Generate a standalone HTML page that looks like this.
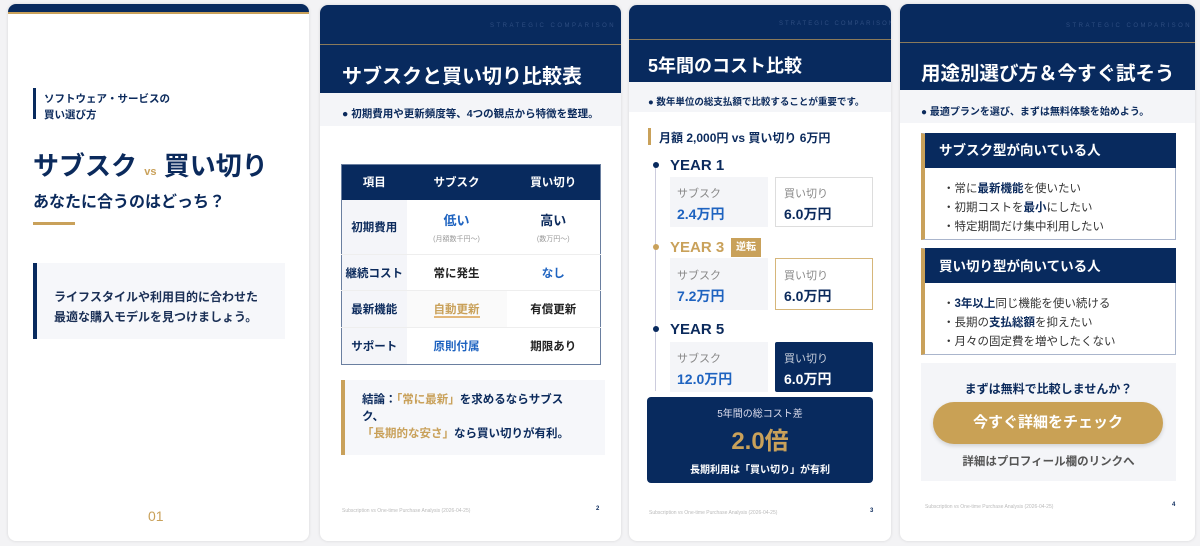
<!DOCTYPE html>
<html><head><meta charset="utf-8"><style>
*{margin:0;padding:0;box-sizing:border-box}
body{width:1200px;height:546px;background:#f3f3f5;position:relative;overflow:hidden;font-family:"Liberation Sans","Noto Sans CJK JP",sans-serif;color:#0b2a5c}
.card{position:absolute;background:#fff;border-radius:8px;overflow:hidden;box-shadow:0 0 3px rgba(0,0,0,.12)}
.a{position:absolute;white-space:nowrap}
.nv{background:#082a5e}
.gold{color:#c9a15a}
.b{font-weight:bold}
.strat{font-size:6px;letter-spacing:2.5px;color:#2e4d80}
.foot{font-size:5px;color:#bbb}
.band{background:#f4f5f8}
td{text-align:center;font-weight:bold;font-size:11.5px}
</style></head><body>

<!-- card 1 -->
<div class="card" style="left:8px;top:4px;width:301px;height:537px">
 <div class="a nv" style="left:0;top:0;width:301px;height:8px"></div>
 <div class="a" style="left:0;top:8px;width:301px;height:2px;background:#c9a15a"></div>
 <div class="a nv" style="left:25px;top:84px;width:3px;height:31px"></div>
 <div class="a b" style="left:36px;top:87px;font-size:10.5px;line-height:16px">ソフトウェア・サービスの<br>買い選び方</div>
 <div class="a b" style="left:25px;top:142px;font-size:26px">サブスク <span class="gold" style="font-size:11px">vs</span> 買い切り</div>
 <div class="a b" style="left:25px;top:184px;font-size:16px">あなたに合うのはどっち？</div>
 <div class="a" style="left:25px;top:218px;width:42px;height:3px;background:#c9a15a"></div>
 <div class="a" style="left:25px;top:259px;width:252px;height:76px;background:#f6f7fa"></div>
 <div class="a nv" style="left:25px;top:259px;width:4px;height:76px"></div>
 <div class="a b" style="left:46px;top:283px;font-size:12px;line-height:20px;color:#1a2f55">ライフスタイルや利用目的に合わせた<br>最適な購入モデルを見つけましょう。</div>
 <div class="a gold" style="left:140px;top:504px;font-size:14px">01</div>
</div>

<!-- card 2 -->
<div class="card" style="left:320px;top:5px;width:301px;height:536px">
 <div class="a nv" style="left:0;top:0;width:301px;height:88px"></div>
 <div class="a strat" style="left:170px;top:18px">STRATEGIC COMPARISON</div>
 <div class="a" style="left:0;top:39px;width:301px;height:1px;background:#8a7a5a"></div>
 <div class="a b" style="left:22px;top:55px;font-size:20px;color:#fff">サブスクと買い切り比較表</div>
 <div class="a band" style="left:0;top:88px;width:301px;height:33px"></div>
 <div class="a b" style="left:22px;top:101px;font-size:10.5px">● 初期費用や更新頻度等、4つの観点から特徴を整理。</div>
 <table class="a" style="left:21px;top:159px;width:260px;height:200px;border-collapse:collapse;border:1px solid #6a7fa0">
  <tr class="nv" style="height:35px;color:#fff"><td style="width:65px">項目</td><td style="width:100px">サブスク</td><td>買い切り</td></tr>
  <tr style="height:55px"><td style="background:#f4f5f9">初期費用</td><td style="color:#1e63c0;font-size:13px">低い<br><span style="font-size:7px;color:#999;font-weight:normal">(月額数千円〜)</span></td><td style="font-size:13px">高い<br><span style="font-size:7px;color:#999;font-weight:normal">(数万円〜)</span></td></tr>
  <tr style="height:36px;border-top:1px solid #eee"><td style="background:#f4f5f9">継続コスト</td><td style="color:#222">常に発生</td><td style="color:#1e63c0">なし</td></tr>
  <tr style="height:37px;border-top:1px solid #eee"><td style="background:#f4f5f9">最新機能</td><td style="background:#fafafa"><span style="color:#c9a15a;border-bottom:2px solid #e2b77a">自動更新</span></td><td style="color:#222">有償更新</td></tr>
  <tr style="height:37px;border-top:1px solid #eee"><td style="background:#f4f5f9">サポート</td><td style="color:#1e63c0">原則付属</td><td style="color:#222">期限あり</td></tr>
 </table>
 <div class="a" style="left:21px;top:375px;width:264px;height:75px;background:#f6f7fa"></div>
 <div class="a" style="left:21px;top:375px;width:4px;height:75px;background:#c9a15a"></div>
 <div class="a b" style="left:42px;top:387px;font-size:11.5px;line-height:17px">結論：<span class="gold">「常に最新」</span>を求めるならサブス<br>ク、<br><span class="gold">「長期的な安さ」</span>なら買い切りが有利。</div>
 <div class="a foot" style="left:22px;top:503px">Subscription vs One-time Purchase Analysis (2026-04-25)</div>
 <div class="a b" style="left:276px;top:501px;font-size:6px">2</div>
</div>

<!-- card 3 -->
<div class="card" style="left:629px;top:5px;width:262px;height:536px">
 <div class="a nv" style="left:0;top:0;width:262px;height:77px"></div>
 <div class="a strat" style="left:150px;top:16px;letter-spacing:2px">STRATEGIC COMPARISON</div>
 <div class="a" style="left:0;top:34px;width:262px;height:1px;background:#8a7a5a"></div>
 <div class="a b" style="left:19px;top:47px;font-size:18px;color:#fff">5年間のコスト比較</div>
 <div class="a band" style="left:0;top:77px;width:262px;height:30px"></div>
 <div class="a b" style="left:19px;top:89px;font-size:9.5px">● 数年単位の総支払額で比較することが重要です。</div>
 <div class="a" style="left:19px;top:123px;width:3px;height:17px;background:#c9a15a"></div>
 <div class="a b" style="left:30px;top:124px;font-size:12px">月額 2,000円 vs 買い切り 6万円</div>
 <div class="a" style="left:26px;top:158px;width:1px;height:228px;background:#ccd"></div>
 <div class="a nv" style="left:24px;top:157px;width:6px;height:6px;border-radius:50%"></div>
 <div class="a b" style="left:41px;top:152px;font-size:15px">YEAR 1</div>
 <div class="a band" style="left:41px;top:172px;width:98px;height:50px"></div>
 <div class="a" style="left:48px;top:180px;font-size:11px;color:#888">サブスク</div>
 <div class="a b" style="left:48px;top:199px;font-size:14px;color:#1e63c0">2.4万円</div>
 <div class="a" style="left:146px;top:172px;width:98px;height:50px;border:1px solid #ddd"></div>
 <div class="a" style="left:155px;top:180px;font-size:11px;color:#888">買い切り</div>
 <div class="a b" style="left:155px;top:199px;font-size:14px">6.0万円</div>
 <div class="a" style="left:24px;top:239px;width:6px;height:6px;border-radius:50%;background:#c9a15a"></div>
 <div class="a b gold" style="left:41px;top:234px;font-size:15px">YEAR 3</div>
 <div class="a b" style="left:102px;top:233px;width:30px;height:19px;background:#c9a15a;color:#fff;font-size:10px;text-align:center;line-height:19px">逆転</div>
 <div class="a band" style="left:41px;top:253px;width:98px;height:52px"></div>
 <div class="a" style="left:48px;top:262px;font-size:11px;color:#888">サブスク</div>
 <div class="a b" style="left:48px;top:281px;font-size:14px;color:#1e63c0">7.2万円</div>
 <div class="a" style="left:146px;top:253px;width:98px;height:52px;border:1px solid #d6b67a"></div>
 <div class="a" style="left:155px;top:262px;font-size:11px;color:#888">買い切り</div>
 <div class="a b" style="left:155px;top:281px;font-size:14px">6.0万円</div>
 <div class="a nv" style="left:24px;top:321px;width:6px;height:6px;border-radius:50%"></div>
 <div class="a b" style="left:41px;top:316px;font-size:15px">YEAR 5</div>
 <div class="a band" style="left:41px;top:337px;width:98px;height:50px"></div>
 <div class="a" style="left:48px;top:345px;font-size:11px;color:#888">サブスク</div>
 <div class="a b" style="left:48px;top:364px;font-size:14px;color:#1e63c0">12.0万円</div>
 <div class="a nv" style="left:146px;top:337px;width:98px;height:50px;border-radius:2px"></div>
 <div class="a" style="left:155px;top:345px;font-size:11px;color:#c8cfdc">買い切り</div>
 <div class="a b" style="left:155px;top:364px;font-size:14px;color:#fff">6.0万円</div>
 <div class="a nv" style="left:18px;top:392px;width:226px;height:86px;border-radius:4px"></div>
 <div class="a" style="left:18px;top:400px;width:226px;text-align:center;font-size:10px;color:#dde">5年間の総コスト差</div>
 <div class="a b gold" style="left:18px;top:416px;width:226px;text-align:center;font-size:24px">2.0倍</div>
 <div class="a b" style="left:18px;top:456px;width:226px;text-align:center;font-size:10px;color:#fff">長期利用は「買い切り」が有利</div>
 <div class="a foot" style="left:20px;top:505px">Subscription vs One-time Purchase Analysis (2026-04-25)</div>
 <div class="a b" style="left:241px;top:503px;font-size:6px">3</div>
</div>

<!-- card 4 -->
<div class="card" style="left:900px;top:4px;width:295px;height:537px">
 <div class="a nv" style="left:0;top:0;width:295px;height:86px"></div>
 <div class="a strat" style="left:166px;top:19px">STRATEGIC COMPARISON</div>
 <div class="a" style="left:0;top:38px;width:295px;height:1px;background:#8a7a5a"></div>
 <div class="a b" style="left:21px;top:53px;font-size:19.5px;color:#fff">用途別選び方＆今すぐ試そう</div>
 <div class="a band" style="left:0;top:86px;width:295px;height:33px"></div>
 <div class="a b" style="left:21px;top:99px;font-size:10px">● 最適プランを選び、まずは無料体験を始めよう。</div>

 <div class="a" style="left:21px;top:129px;width:255px;height:107px;border:1px solid #aab5cc;border-left:4px solid #c9a15a"></div>
 <div class="a nv" style="left:25px;top:129px;width:251px;height:35px"></div>
 <div class="a b" style="left:39px;top:145px;font-size:13.5px;color:#fff;transform:translateY(-50%)">サブスク型が向いている人</div>
 <div class="a" style="left:43px;top:176px;font-size:11.5px;line-height:19px;color:#333">・常に<b style="color:#0b2a5c">最新機能</b>を使いたい<br>・初期コストを<b style="color:#0b2a5c">最小</b>にしたい<br>・特定期間だけ集中利用したい</div>

 <div class="a" style="left:21px;top:244px;width:255px;height:107px;border:1px solid #aab5cc;border-left:4px solid #c9a15a"></div>
 <div class="a nv" style="left:25px;top:244px;width:251px;height:35px"></div>
 <div class="a b" style="left:39px;top:261px;font-size:13.5px;color:#fff;transform:translateY(-50%)">買い切り型が向いている人</div>
 <div class="a" style="left:43px;top:291px;font-size:11.5px;line-height:19px;color:#333">・<b style="color:#0b2a5c">3年以上</b>同じ機能を使い続ける<br>・長期の<b style="color:#0b2a5c">支払総額</b>を抑えたい<br>・月々の固定費を増やしたくない</div>

 <div class="a band" style="left:21px;top:359px;width:255px;height:118px"></div>
 <div class="a b" style="left:21px;top:376px;width:255px;text-align:center;font-size:12px">まずは無料で比較しませんか？</div>
 <div class="a b" style="left:33px;top:398px;width:230px;height:42px;border-radius:21px;background:#c9a155;color:#fff;font-size:15px;text-align:center;line-height:42px;box-shadow:0 2px 4px rgba(0,0,0,.15)">今すぐ詳細をチェック</div>
 <div class="a b" style="left:21px;top:449px;width:255px;text-align:center;font-size:11.5px;color:#555">詳細はプロフィール欄のリンクへ</div>
 <div class="a foot" style="left:25px;top:500px">Subscription vs One-time Purchase Analysis (2026-04-25)</div>
 <div class="a b" style="left:272px;top:498px;font-size:6px">4</div>
</div>
</body></html>
